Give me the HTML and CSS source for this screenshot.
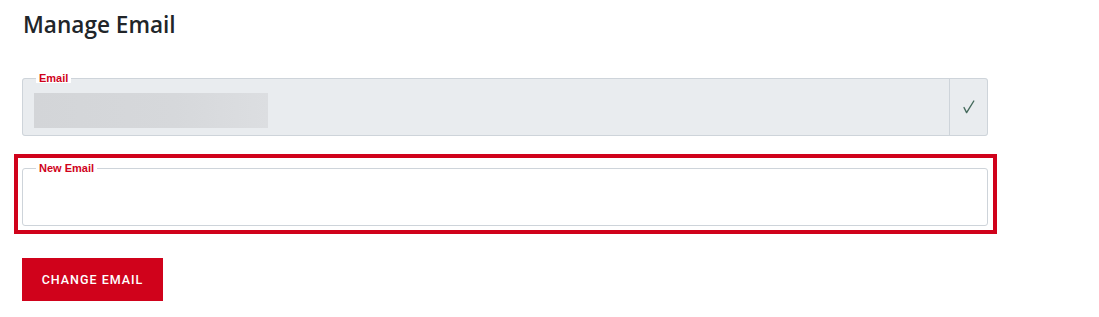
FILE: index.html
```html
<!DOCTYPE html>
<html lang="en">
<head>
<meta charset="utf-8">
<title>Manage Email</title>
<link rel="stylesheet" href="styles.css">
</head>
<body>
<main class="page">
  <h1 class="title">Manage Email</h1>
  <form class="form">
    <fieldset class="field field--readonly">
      <legend class="field-label">Email</legend>
      <div class="field-row">
        <div class="field-value"><span class="blurred"></span></div>
        <div class="field-addon">
          <svg class="check" width="12" height="14" viewBox="0 0 12 14" aria-hidden="true">
            <path d="M1 7.5 L3.6 12.6 L10.8 1" fill="none" stroke="currentColor" stroke-width="1.4" stroke-linecap="round" stroke-linejoin="round"/>
          </svg>
        </div>
      </div>
    </fieldset>
    <div class="focus-ring">
      <fieldset class="field">
        <legend class="field-label">New Email</legend>
        <div class="field-row">
          <input class="field-input" type="email" aria-label="New Email">
        </div>
      </fieldset>
    </div>
    <button class="btn-primary" type="button">CHANGE EMAIL</button>
  </form>
</main>
</body>
</html>
```
FILE: styles.css
```css
* { box-sizing: border-box; }
html, body { margin: 0; padding: 0; background: #fff; }
body { font-family: "Open Sans", "Noto Sans", sans-serif; color: #212529; }

.page { padding: 8px 0 0 22px; width: 988px; }

.title {
  margin: 0 0 0 1px;
  font-size: 22.6px;
  font-weight: 600;
  line-height: 34px;
  color: #212529;
}

.form { margin-top: 32px; display: flex; flex-direction: column; align-items: flex-start; }

.field {
  margin: 0;
  padding: 0;
  width: 966px;
  border: 1px solid #ced4da;
  border-radius: 3px;
  min-width: 0;
}
.field--readonly { background: #e9ecef; }

.field-label {
  margin-left: 13px;
  padding: 0 3px;
  font-family: "Liberation Sans", Arial, sans-serif;
  font-size: 11px;
  font-weight: 700;
  line-height: 9px;
  color: #d0021b;
  background: #fff;
}

.field-row { display: flex; height: 57px; margin-top: -5px; }
.field-value { flex: 1; padding: 15px 0 0 11px; }
.blurred {
  display: block;
  width: 234px;
  height: 35px;
  background: linear-gradient(90deg, #d3d5d8 0%, #d6d8db 60%, #dcdee1 100%);
}
.field-addon {
  width: 38px;
  border-left: 1px solid #ced4da;
  display: flex;
  align-items: center;
  justify-content: center;
}
.check {
  display: block;
  color: #456a5c;
  margin: 1px 0 0 1px;
}

.field-input {
  flex: 1;
  border: 0;
  outline: 0;
  background: transparent;
  margin: 0;
  padding: 0 12px;
  font-size: 14px;
}

.focus-ring {
  margin: 18px 0 0 -8px;
  border: 4px solid #d0021b;
  padding: 6px 5px 4px 4px;
}

.btn-primary {
  margin-top: 24px;
  width: 141px;
  height: 43px;
  border: 0;
  border-radius: 0;
  background: #d0021b;
  color: #fff;
  font-family: "Roboto", "Liberation Sans", sans-serif;
  font-size: 12.5px;
  font-weight: 500;
  letter-spacing: 1px;
  padding: 0;
  cursor: pointer;
}
```
